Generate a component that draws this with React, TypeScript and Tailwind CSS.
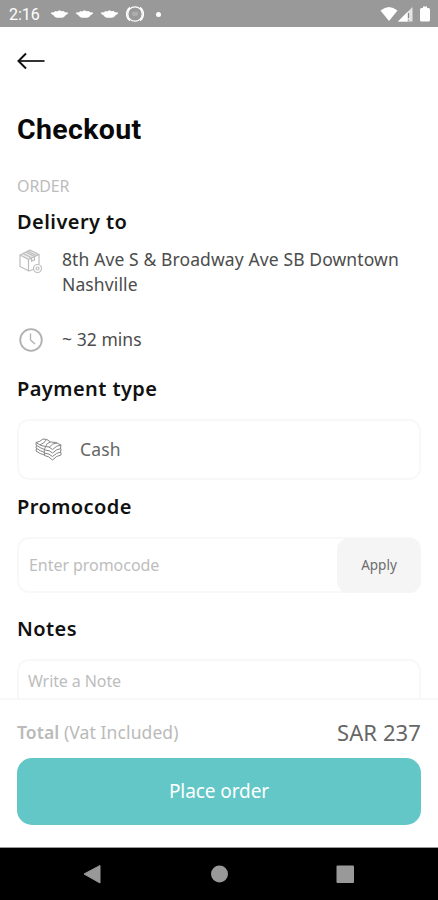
import { ReactNode } from 'react';

function StatusBar() {
  return (
    <div className="h-[27px] bg-[#999999] flex items-center pl-[9px] pr-2 text-white shrink-0">
      <span className="font-['Roboto',sans-serif] text-[16px] leading-[27px] w-[31px] whitespace-nowrap mt-[2px]">
        2:16
      </span>
      <div className="flex items-center gap-2 ml-[11px] mt-[1px]">
        {[0, 1, 2].map((i) => (
          <BowlIcon key={i} />
        ))}
        <svg width="18" height="18" viewBox="0 0 18 18" fill="none" stroke="currentColor">
          <circle cx="9" cy="9" r="7.2" strokeWidth="1.2" />
          <path d="M4 2.5A8 8 0 0 0 4 15.5M14 2.5A8 8 0 0 1 14 15.5" strokeWidth="1.6" />
          <path d="M6 8h6M6.5 10h5" strokeWidth="0.8" opacity="0.5" />
        </svg>
      </div>
      <span className="size-[5px] rounded-full bg-white ml-3 mt-[1px]" />
      <div className="flex items-center ml-auto">
        <svg width="18" height="16" viewBox="0 0 18 16" fill="currentColor">
          <path d="M.5 4.500Q9-2.500 17.500 4.500L9 15Z" />
        </svg>
        <svg width="15" height="16" viewBox="0 0 15 16">
          <path d="M0 15.500L14.500 1V15.500Z" fill="#ffffff" opacity="0.75" />
          <path d="M0 15.500L9.500 6V15.500Z" fill="#ffffff" />
          <path d="M10.500 7v5M10.500 13.500v1" stroke="#888888" strokeWidth="1.200" />
        </svg>
        <svg className="ml-[7px]" width="10" height="16" viewBox="0 0 10 16" fill="currentColor">
          <path d="M3 .5h4V2h1.500Q10 2 10 3.500V14q0 1.500-1.500 1.500h-7Q0 15.500 0 14V3.500Q0 2 1.500 2H3Z" />
        </svg>
      </div>
    </div>
  );
}

function BowlIcon() {
  return (
    <svg width="17" height="8" viewBox="0 0 17 8" fill="currentColor">
      <path d="M0 2.500L3 2.300 4.500 1l1.500.5L8.500.3l2 1L12.500 1l1.500 1.300 3 .2-.3 1.600-1.900.9Q13 7.800 11 7.800H6Q4 7.800 2.200 5L.3 4.100Z" />
    </svg>
  );
}

function PackageIcon() {
  return (
    <svg width="24" height="26" viewBox="0 0 24 26" fill="none" stroke="#bcbcbc" strokeWidth="1.200" strokeLinejoin="round">
      <path d="M1 6L11 1l9 4.500L9.500 10.500Z" fill="#ededed" />
      <path d="M1 6v11.500l9 4.500 4-1.500M9.500 10.500V22M20 5.500V15" />
      <path d="M4 4.500l8.500 4.200v3.500l3-1.300V7.500L7 3.200M9 2.300l8.500 4.200" />
      <circle cx="18.500" cy="19.500" r="4" fill="#ffffff" />
      <circle cx="18.500" cy="19.500" r="1.500" />
    </svg>
  );
}

function ClockIcon() {
  return (
    <svg width="24" height="24" viewBox="0 0 24 24" fill="none" stroke="#b0b0b0">
      <circle cx="12" cy="12" r="10.800" strokeWidth="1.800" />
      <path d="M11.500 5.500V12l4.500 4" strokeWidth="1.300" />
    </svg>
  );
}

function CashIcon() {
  return (
    <svg width="27" height="23" viewBox="0 0 27 23" fill="none" stroke="#858585" strokeWidth="1" strokeLinejoin="round">
      <path d="M1 4.500Q5 4 8 1q4-.5 7.500 3Q21 3.500 26 7q-4 0-8.500 4.500Q14 8 10.500 8.500Q5 8 1 4.500Z" />
      <path d="M1 4.500v2.500q4 3 8.500 4.500M1.500 7.500L1 10q4 3 8.500 4.500M1.500 10.500L1 13q4 3 8.500 4" />
      <path d="M10.500 8.500q-2 3-1 9 4.500.5 8 4.500 4-4.500 8.500-5v-2l-.5-1 .5-2.500-.5-1.500L26 7" />
      <path d="M10 12q4.500 0 7.500 3 4-4 8.500-4.500M9.500 15q5 .5 8 3.500 4-4 8.500-4.500" />
      <path d="M5 6.800Q9 5.500 11.500 1.700M10.500 8.500q1-3.500 5-4.500M14 9.500q3-4.500 8-4.500" />
    </svg>
  );
}

function Heading({ children }: { children: ReactNode }) {
  return (
    <h2 className="text-[20px] leading-[28px] font-semibold tracking-[0.43px] text-[#111111]">
      {children}
    </h2>
  );
}

export default function App() {
  return (
    <div className="w-[438px] h-[900px] flex flex-col bg-white overflow-hidden font-['Noto_Sans',sans-serif]">
      <StatusBar />

      <main className="flex-1 min-h-0 overflow-hidden px-[17px]">
        <svg className="mt-[25px]" width="28" height="18" viewBox="0 0 28 18" fill="none" stroke="#111111">
          <path d="M1.500 9H27.500" strokeWidth="2" stroke="#333333" />
          <path d="M9 1.500L1.500 9L9 16.500" strokeWidth="2" />
        </svg>

        <h1 className="mt-[42px] text-[28.5px] leading-[36px] font-bold tracking-[0.35px] text-[#080808] font-['Roboto',sans-serif]">
          Checkout
        </h1>
        <p className="mt-[28px] text-[16px] leading-[20px] tracking-[-0.1px] text-[#bcbcbc]">ORDER</p>

        <div className="mt-[12px]">
          <Heading>Delivery to</Heading>
        </div>
        <div className="mt-[11px] flex">
          <div className="w-[45px] pt-[2px] pl-[2px]">
            <PackageIcon />
          </div>
          <p className="text-[17.5px] leading-[25px] tracking-[0.11px] text-[#4c4c4c] whitespace-nowrap">
            8th Ave S &amp; Broadway Ave SB Downtown
            <br />
            Nashville
          </p>
        </div>
        <div className="mt-[29px] flex items-center">
          <div className="w-[45px] pl-[2px] pt-[2px]">
            <ClockIcon />
          </div>
          <p className="text-[17.5px] leading-[26px] tracking-[0.05px] text-[#4c4c4c]">~ 32 mins</p>
        </div>

        <div className="mt-[23px]">
          <Heading>Payment type</Heading>
        </div>
        <div className="mt-[16px] h-[61px] rounded-[12px] border-2 border-[#f8f8f8] flex items-center pl-[16px]">
          <CashIcon />
          <span className="ml-[18px] text-[17.5px] tracking-[0.2px] text-[#666666]">Cash</span>
        </div>

        <div className="mt-[13px]">
          <Heading>Promocode</Heading>
        </div>
        <div className="mt-[16px] h-[56px] rounded-[12px] border-2 border-[#f8f8f8] flex items-center justify-between pl-[10px]">
          <span className="text-[16px] tracking-[-0.05px] text-[#bdbdbd]">Enter promocode</span>
          <button className="-mr-[2px] w-[84px] h-[55px] rounded-[12px] bg-[#f5f5f5] text-[13.5px] text-[#6c6c6c]">
            Apply
          </button>
        </div>

        <div className="mt-[22px]">
          <Heading>Notes</Heading>
        </div>
        <div className="mt-[16px] h-[100px] rounded-[12px] border-2 border-[#f8f8f8] pl-[9px] pt-[8px]">
          <p className="text-[16px] leading-[24px] tracking-[-0.1px] text-[#bdbdbd]">Write a Note</p>
        </div>
      </main>

      <footer className="h-[149px] shrink-0 border-t-2 border-[#f7f7f7] px-[17px] pt-[16px]">
        <div className="h-[32px] flex items-center justify-between mb-[10px]">
          <p className="text-[17.5px] tracking-[0.1px] text-[#bababa]">
            <span className="font-semibold">Total</span> (Vat Included)
          </p>
          <p className="text-[22px] tracking-[0.1px] text-[#666666]">SAR 237</p>
        </div>
        <button className="w-full h-[67px] rounded-[15px] bg-[#63c7c7] text-white text-[19px] tracking-[-0.08px]">
          Place order
        </button>
      </footer>

      <nav className="h-[53px] shrink-0 bg-black border-t border-[#999999]">
        <svg width="438" height="52" viewBox="0 848 438 52" fill="#999999">
          <path d="M84 874L100 865.500v17.500Z" stroke="#999999" strokeLinejoin="round" />
          <circle cx="219.500" cy="874" r="8.500" />
          <rect x="336.500" y="865.500" width="17.500" height="17.500" rx="1" />
        </svg>
      </nav>
    </div>
  );
}
